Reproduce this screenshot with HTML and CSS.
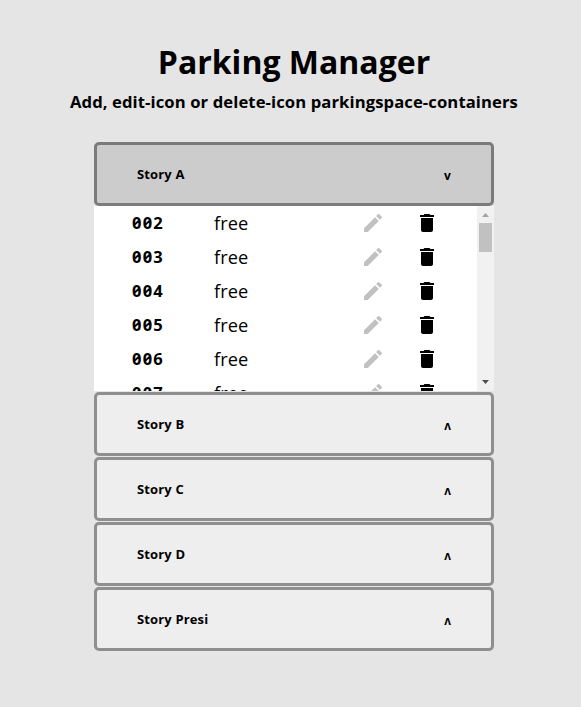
FILE: index.html
```html
<!DOCTYPE html>
<html lang="en">
<head>
<meta charset="utf-8">
<title>Parking Manager</title>
<link rel="stylesheet" href="styles.css">
</head>
<body>
<svg class="sprite" aria-hidden="true">
  <symbol id="edit-icon" viewBox="0 0 24 24"><path d="M3 17.25V21h3.75L17.81 9.94l-3.75-3.75L3 17.25zM20.71 7.04a1 1 0 0 0 0-1.41l-2.34-2.34a1 1 0 0 0-1.41 0l-1.83 1.83 3.75 3.75 1.83-1.83z"/></symbol>
  <symbol id="delete-icon" viewBox="0 0 24 24"><path d="M6 19c0 1.1.9 2 2 2h8c1.1 0 2-.9 2-2V7H6v12zM19 4h-3.5l-1-1h-5l-1 1H5v2h14V4z"/></symbol>
</svg>
<header class="header">
  <h1 class="title">Parking Manager</h1>
  <p class="subtitle">Add, edit-icon or delete-icon parkingspace-containers</p>
</header>
<main class="stories">
  <section class="story">
    <button class="story-head open"><span>Story A</span><span class="arrow">v</span></button>
    <div class="panel">
      <div class="spaces">
        <div class="space"><span class="number">002</span><span class="state">free</span><svg class="icon edit"><use href="#edit-icon"/></svg><svg class="icon delete"><use href="#delete-icon"/></svg></div>
        <div class="space"><span class="number">003</span><span class="state">free</span><svg class="icon edit"><use href="#edit-icon"/></svg><svg class="icon delete"><use href="#delete-icon"/></svg></div>
        <div class="space"><span class="number">004</span><span class="state">free</span><svg class="icon edit"><use href="#edit-icon"/></svg><svg class="icon delete"><use href="#delete-icon"/></svg></div>
        <div class="space"><span class="number">005</span><span class="state">free</span><svg class="icon edit"><use href="#edit-icon"/></svg><svg class="icon delete"><use href="#delete-icon"/></svg></div>
        <div class="space"><span class="number">006</span><span class="state">free</span><svg class="icon edit"><use href="#edit-icon"/></svg><svg class="icon delete"><use href="#delete-icon"/></svg></div>
        <div class="space"><span class="number">007</span><span class="state">free</span><svg class="icon edit"><use href="#edit-icon"/></svg><svg class="icon delete"><use href="#delete-icon"/></svg></div>
      </div>
      <div class="scrollbar">
        <svg class="step up" viewBox="0 0 17 17"><path d="M5 11h7L8.5 7z"/></svg>
        <div class="thumb"></div>
        <svg class="step down" viewBox="0 0 17 17"><path d="M5 6h7L8.5 10z"/></svg>
      </div>
    </div>
  </section>
  <section class="story"><button class="story-head"><span>Story B</span><span class="arrow">ʌ</span></button></section>
  <section class="story"><button class="story-head"><span>Story C</span><span class="arrow">ʌ</span></button></section>
  <section class="story"><button class="story-head"><span>Story D</span><span class="arrow">ʌ</span></button></section>
  <section class="story"><button class="story-head"><span>Story Presi</span><span class="arrow">ʌ</span></button></section>
</main>
</body>
</html>
```
FILE: styles.css
```css
* { box-sizing: border-box; }
body {
  margin: 0;
  min-height: 707px;
  padding: 40px 0 0 7px;
  background: #e5e5e5;
  color: #000;
  font-family: "Open Sans", sans-serif;
}
.sprite { display: none; }
.header { text-align: center; }
.title { margin: 0; font-size: 32px; font-weight: 700; line-height: 44px; }
.subtitle { margin: 7px 0 0; font-size: 16.64px; font-weight: 700; letter-spacing: 0.1px; line-height: 22px; white-space: nowrap; }
.stories {
  display: flex;
  flex-direction: column;
  gap: 1px;
  width: 400px;
  margin: 29px auto 0;
}
.story-head {
  display: flex;
  justify-content: space-between;
  align-items: center;
  width: 100%;
  height: 64px;
  padding: 0 40px;
  border: 3px solid #8f8f8f;
  border-radius: 5px;
  background: #eee;
  color: #000;
  font: 700 13px/18px "Open Sans", sans-serif;
  letter-spacing: 0.15px;
}
.story-head.open { background: #ccc; border-color: #7b7b7b; }
.arrow { padding-top: 3px; font-size: 12px; font-weight: 700; }
.panel { display: flex; height: 185px; background: #fff; overflow: hidden; }
.spaces { flex: 1; }
.space {
  display: grid;
  grid-template-columns: 82px 147px 54px 24px;
  align-items: center;
  height: 34px;
  padding-left: 38px;
}
.state { font-size: 18.2px; font-weight: 500; line-height: 24px; letter-spacing: 0.1px; }
.number { font-size: 16.5px; font-weight: 700; line-height: 24px; letter-spacing: 1.2px; font-variant-numeric: slashed-zero; }
.icon { width: 24px; height: 24px; }
.edit { fill: #c1c1c1; }
.scrollbar { display: flex; flex-direction: column; width: 17px; background: #f1f1f1; }
.step { width: 17px; height: 17px; }
.up { fill: #a3a3a3; }
.down { fill: #505050; margin-top: auto; }
.thumb { height: 29px; margin: 0 2px; background: #c1c1c1; }
```
